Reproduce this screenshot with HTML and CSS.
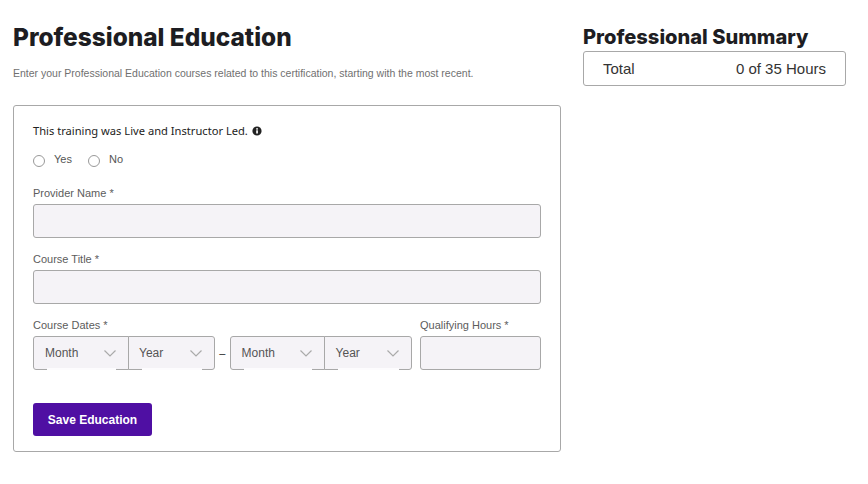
FILE: index.html
```html
<!DOCTYPE html>
<html lang="en">
<head>
<meta charset="utf-8">
<title>Professional Education</title>
<link rel="stylesheet" href="styles.css">
</head>
<body>
<div class="page">
  <main class="main">
    <h1 class="title">Professional Education</h1>
    <p class="intro">Enter your Professional Education courses related to this certification, starting with the most recent.</p>
    <form class="card">
      <div class="question">This training was Live and Instructor Led.
        <svg class="info" viewBox="0 0 10 10" width="10" height="10"><circle cx="5" cy="5" r="4.6" fill="#222"/><rect x="4.2" y="4.3" width="1.7" height="3.2" fill="#fff"/><rect x="4.2" y="2.2" width="1.7" height="1.4" fill="#fff"/></svg>
      </div>
      <div class="radios">
        <label class="radio"><span class="dot"></span><span>Yes</span></label>
        <label class="radio"><span class="dot"></span><span>No</span></label>
      </div>
      <div class="field">
        <label class="label">Provider Name *</label>
        <div class="input"></div>
      </div>
      <div class="field">
        <label class="label">Course Title *</label>
        <div class="input"></div>
      </div>
      <div class="dates-row">
        <div class="dates">
          <label class="label">Course Dates *</label>
          <div class="date-range">
            <div class="pair">
              <div class="select month">Month<svg class="chev" viewBox="0 0 12 7" width="12" height="7"><path d="M.5.5 6 6 11.500.5" fill="none" stroke="#aaa" stroke-width="1.200"/></svg></div>
              <div class="select year">Year<svg class="chev" viewBox="0 0 12 7" width="12" height="7"><path d="M.5.5 6 6 11.500.5" fill="none" stroke="#aaa" stroke-width="1.200"/></svg></div>
            </div>
            <span class="dash">–</span>
            <div class="pair">
              <div class="select month">Month<svg class="chev" viewBox="0 0 12 7" width="12" height="7"><path d="M.5.5 6 6 11.500.5" fill="none" stroke="#aaa" stroke-width="1.200"/></svg></div>
              <div class="select year">Year<svg class="chev" viewBox="0 0 12 7" width="12" height="7"><path d="M.5.5 6 6 11.500.5" fill="none" stroke="#aaa" stroke-width="1.200"/></svg></div>
            </div>
          </div>
        </div>
        <div class="hours">
          <label class="label">Qualifying Hours *</label>
          <div class="input"></div>
        </div>
      </div>
      <button type="button" class="save">Save Education</button>
    </form>
  </main>
  <aside class="side">
    <h2 class="side-title">Professional Summary</h2>
    <div class="summary"><span>Total</span><span>0 of 35 Hours</span></div>
  </aside>
</div>
</body>
</html>
```
FILE: styles.css
```css
* { box-sizing: border-box; }
html, body { margin: 0; padding: 0; background: #fff; }
body { font-family: "Liberation Sans", Arial, sans-serif; color: #222; }
.page { display: flex; gap: 22px; padding: 20px 22px 0 13px; align-items: flex-start; }
.main { width: 548px; flex: none; }
.side { flex: 1; }
.title { margin: 0; padding-top: 1px; font: 800 24.4px/33px Inter, sans-serif; color: #1d1d22; }
.intro { margin: 11px 0 0; font-size: 10.5px; line-height: 16px; color: #707070; }
.card { margin-top: 24px; height: 347px; border: 1px solid #a8a8a8; border-radius: 3px; padding: 16px 19px 0; }
.question { display: flex; align-items: center; gap: 4px; font: 11.15px/18px "Noto Sans", sans-serif; color: #222; }
.radios { display: flex; gap: 15px; margin-top: 13px; }
.radio { display: flex; align-items: center; gap: 9px; font-size: 11px; line-height: 16px; color: #555; }
.radio span:last-child { margin-top: -2px; padding-right: 1px; }
.dot { width: 12px; height: 12px; border: 1px solid #999; border-radius: 50%; background: #fff; margin-top: 2px; }
.field { margin-top: 18px; }
.field + .field { margin-top: 13px; }
.label { display: block; font-size: 11px; line-height: 16px; color: #5c5c5c; margin-bottom: 3px; }
.input { height: 34px; background: #f5f3f7; border: 1px solid #a8a8a8; border-radius: 3px; }
.dates-row { display: flex; gap: 8px; margin-top: 13px; }
.dates { width: 379px; flex: none; }
.hours { flex: 1; }
.date-range { display: flex; align-items: center; }
.pair { display: flex; width: 182px; flex: none; }
.dash { width: 14.6px; text-align: center; font-size: 11px; color: #222; }
.select { position: relative; display: flex; align-items: center; justify-content: space-between; height: 34px; background: #f5f3f7; border: 1px solid #a8a8a8; font-size: 12px; color: #555; }
.select::after { content: ""; position: absolute; left: 13px; right: 12px; bottom: -1px; height: 2px; background: #fdfcfe; }
.month { width: 95.5px; padding: 0 12px 0 11px; border-radius: 3px 0 0 3px; }
.year { flex: 1; margin-left: -1px; padding: 0 12px 0 10.500px; border-radius: 0 3px 3px 0; }
.save { display: block; margin-top: 33px; width: 119px; height: 33px; border: 0; border-radius: 3px; background: #4f0fa3; color: #fff; font: 700 12px "Liberation Sans", sans-serif; padding: 0; }
.side-title { margin: 0; padding-top: 1px; font: 800 20.1px/33px Inter, sans-serif; color: #1d1d22; }
.summary { display: flex; justify-content: space-between; height: 35px; margin-top: -3px; padding: 0 19px; align-items: center; border: 1px solid #a8a8a8; border-radius: 3px; font-size: 15px; color: #333; }
```
